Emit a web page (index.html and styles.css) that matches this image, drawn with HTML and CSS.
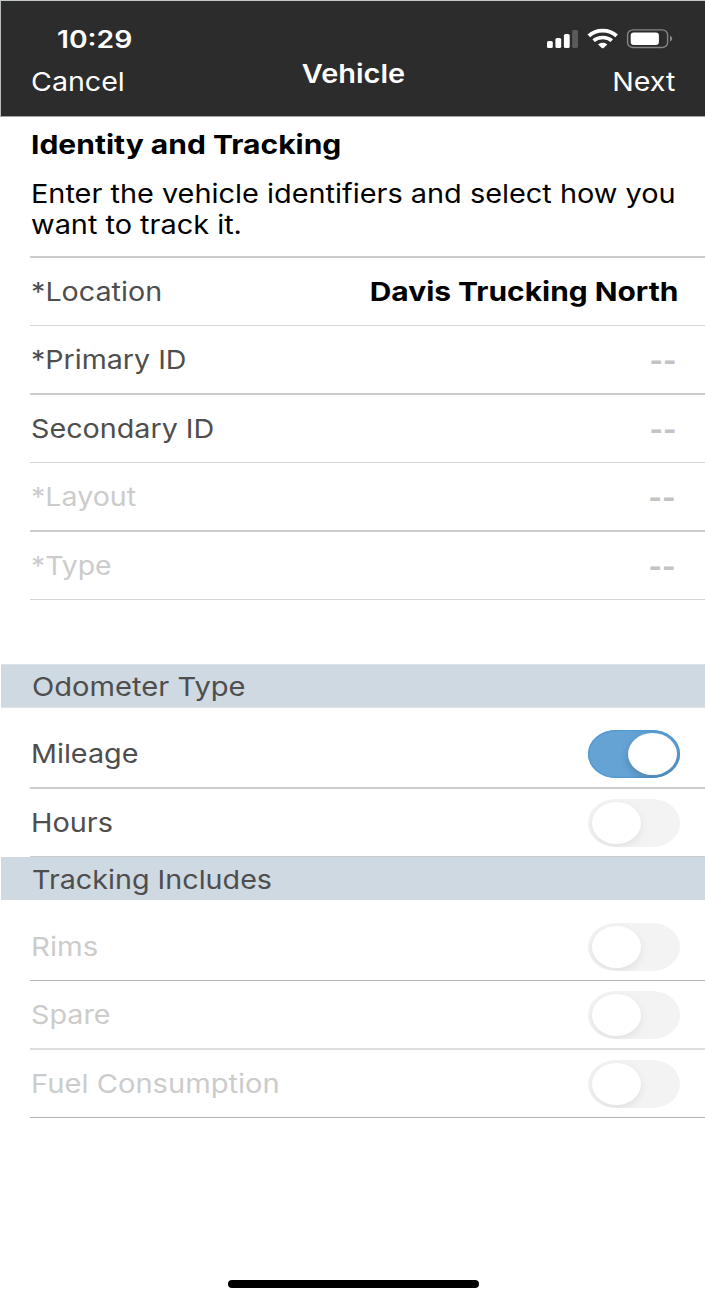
FILE: index.html
```html
<!DOCTYPE html>
<html lang="en">
<head>
<meta charset="utf-8">
<title>Vehicle</title>
<link rel="stylesheet" href="styles.css">
</head>
<body>
<div class="screen">
  <header class="header">
    <div class="status">
      <span class="t time">10:29</span>
      <svg class="status-icons" width="128" height="22" viewBox="0 0 128 22">
        <g fill="#fff">
          <rect x="2" y="14" width="5.8" height="7" rx="1.6"/>
          <rect x="10.4" y="11" width="5.8" height="10" rx="1.6"/>
          <rect x="18.9" y="7" width="5.8" height="14" rx="1.6"/>
          <rect x="27.2" y="3" width="5.8" height="18" rx="1.4" fill="#5a5a5a"/>
        </g>
        <g fill="none" stroke="#fff">
          <path d="M43.8 8.9 C51.3 1.9 64.1 1.9 71.6 8.9" stroke-width="3.8"/>
          <path d="M48.6 13.7 C53.3 9.5 62.1 9.5 66.8 13.7" stroke-width="3.6"/>
        </g>
        <path d="M53.1 17.5 C55.6 15.2 59.8 15.2 62.3 17.5 L58.6 20.9 Q57.7 21.6 56.8 20.9 Z" fill="#fff"/>
        <rect x="82.6" y="2.9" width="40" height="17.6" rx="5.5" ry="4.8" fill="none" stroke="#868686" stroke-width="1.4"/>
        <rect x="85.7" y="5.5" width="28.2" height="12.6" rx="3" fill="#fff"/>
        <path d="M125 8.8 C127.9 9.8 127.9 13.6 125 14.6 Z" fill="#868686"/>
      </svg>
    </div>
    <nav class="nav">
      <span class="t nav-left">Cancel</span>
      <span class="t nav-title">Vehicle</span>
      <span class="t nav-right">Next</span>
    </nav>
  </header>

  <section class="intro">
    <h1 class="t title">Identity and Tracking</h1>
    <p class="desc"><span class="t">Enter the vehicle identifiers and select how you</span><span class="t">want to track it.</span></p>
  </section>

  <section class="rows">
    <div class="row"><span class="t">*Location</span><b class="t value">Davis Trucking North</b></div>
    <div class="row thin"><span class="t star">*Primary ID</span><span class="t empty">--</span></div>
    <div class="row"><span class="t">Secondary ID</span><span class="t empty">--</span></div>
    <div class="row thin off"><span class="t star">*Layout</span><span class="t empty">--</span></div>
    <div class="row off"><span class="t type">*Type</span><span class="t empty">--</span></div>
    <div class="rule"></div>
  </section>

  <h2 class="band first"><span class="t odo">Odometer Type</span></h2>
  <section class="rows">
    <div class="row tall"><span class="t wide">Mileage</span><i class="toggle on"></i></div>
    <div class="row"><span class="t hours">Hours</span><i class="toggle"></i></div>
    <div class="rule mid"></div>
  </section>

  <h2 class="band"><span class="t">Tracking Includes</span></h2>
  <section class="rows includes">
    <div class="row off"><span class="t rims">Rims</span><i class="toggle"></i></div>
    <div class="row dark off"><span class="t wide">Spare</span><i class="toggle"></i></div>
    <div class="row light off"><span class="t fuel">Fuel Consumption</span><i class="toggle"></i></div>
    <div class="rule dark"></div>
  </section>
  <div class="home"></div>
</div>
</body>
</html>
```
FILE: styles.css
```css
* { box-sizing: border-box; }
body { margin: 0; background: #fff; font: 26px/30px Inter, "Liberation Sans", sans-serif; color: #4e4e4e; }
.screen { width: 705px; height: 1300px; display: flex; flex-direction: column; overflow: hidden; }

/* Text is set slightly extended */
.t { display: block; white-space: nowrap; transform: scaleX(var(--sx, 1.104)); transform-origin: left center; }

.header { height: 117px; flex: none; padding-top: 23px; background: #2c2c2c; color: #fff; border-top: 1px solid #c5cbca; border-bottom: 1px solid #a2a2a2; border-left: 1px solid #b9bdbd; }
.status { height: 30px; display: flex; justify-content: space-between; align-items: flex-start; padding: 0 32px 0 56px; }
.time { --sx: 1.178; margin-top: 1px; font-size: 24px; font-weight: 600; }
.status-icons { display: block; margin-top: 3px; }
.nav { display: grid; grid-template-columns: 1fr auto 1fr; padding: 5px 30px 0 30px; }
.nav-left { --sx: 1.1; margin-top: 8px; }
.nav-title { --sx: 1.112; font-weight: 600; transform-origin: center; }
.nav-right { --sx: 1.1; margin-top: 8px; justify-self: end; transform-origin: right center; }

.intro { height: 139px; flex: none; padding: 13px 0 0 30.5px; color: #000; }
.title { --sx: 1.154; margin: 0; font-size: 26px; font-weight: 700; }
.desc { --sx: 1.111; margin: 18px 0 0; line-height: 31px; }
.wide { --sx: 1.105; }

.rows { flex: none; padding-left: 30px; }
.row { height: 69px; display: flex; align-items: center; justify-content: space-between; padding-right: 25px; border-top: 2px solid #ccc; }
.row > .t { padding-top: 1px; margin-left: .5px; }
.row.thin { height: 68px; border-top: 1px solid #d6d6d6; }
.row > .value { --sx: 1.15; margin-right: 2px; font-weight: 700; color: #000; transform-origin: right center; }
.star { --sx: 1.1; }
.type { --sx: 1.09; }
.off { color: #ccc; }
.row > .empty { --sx: 1.1; font-weight: 800; color: #c4c4c4; transform-origin: right center; margin-right: 3.5px; padding-top: 2px; }
.off > .empty { margin-right: 4.5px; }
.rule { height: 1px; background: #d6d6d6; }
.rule.mid { background: #c8cacb; }

.band { height: 43px; flex: none; margin: 0 0 0 1px; padding: 8px 0 0 31px; background: #cfd9e1; font-size: 26px; font-weight: 400; }
.band.first { margin-top: 64px; height: 44px; border-top: 1px solid #dbe3e9; border-bottom: 1px solid #dfe6eb; padding-top: 7px; }
.odo { --sx: 1.12; }
.row.tall { height: 79px; border-top: 0; padding-top: 12px; }
.hours { --sx: 1.11; }
.includes { padding-top: 13px; }
.includes .row:first-child { height: 67px; border-top: 0; }
.includes .row.dark { height: 68px; border-top: 1px solid #b4b4b4; }
.includes .row.light { border-top-color: #dedede; }
.rule.dark { background: #b4b4b4; }
.rims { --sx: 1.13; }
.fuel { --sx: 1.12; }

.toggle { width: 92px; height: 48px; flex: none; padding: 3px 3.5px; display: flex; border-radius: 28px / 24px; background: #f3f3f3; overflow: hidden; }
.toggle::before { content: ""; width: 49px; height: 42px; border-radius: 50%; background: #fff; box-shadow: 0 3px 9px rgba(0, 0, 0, .08); }
.toggle.on { justify-content: flex-end; padding-right: 3px; background: #65a3d5; box-shadow: inset 0 0 0 1.5px #569bd2; }
.toggle.on::before { box-shadow: 0 3px 9px rgba(0, 0, 0, .2); }

.home { width: 251px; height: 8px; flex: none; margin: 162px 0 0 228px; border-radius: 4px; background: #000; }
```
